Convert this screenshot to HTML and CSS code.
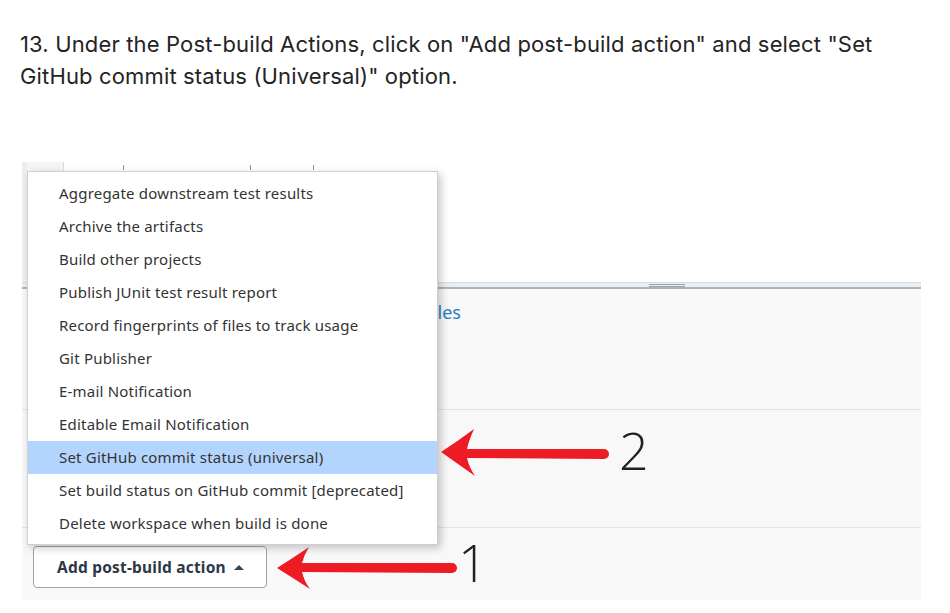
FILE: index.html
```html
<!DOCTYPE html>
<html lang="en">
<head>
<meta charset="utf-8">
<title>Post-build action</title>
<link rel="stylesheet" href="styles.css">
</head>
<body>
<p class="intro">13. Under the Post-build Actions, click on "Add post-build action" and select "Set GitHub commit status (Universal)" option.</p>
<div class="shot">
  <div class="top-panel">
    <div class="tabs">
      <span class="tab-first"></span>
      <span class="tick t1"></span>
      <span class="tick t2"></span>
      <span class="tick t3"></span>
    </div>
  </div>
  <div class="splitter"><span class="grip"></span></div>
  <div class="section s1">
    <div class="link-row"><a class="link">Inject environment variables</a></div>
  </div>
  <div class="section s2"></div>
  <div class="section s3">
    <button class="add-btn" type="button">Add post-build action<span class="caret"></span></button>
  </div>

  <ul class="menu">
    <li>Aggregate downstream test results</li>
    <li>Archive the artifacts</li>
    <li>Build other projects</li>
    <li>Publish JUnit test result report</li>
    <li>Record fingerprints of files to track usage</li>
    <li>Git Publisher</li>
    <li>E-mail Notification</li>
    <li>Editable Email Notification</li>
    <li class="active">Set GitHub commit status (universal)</li>
    <li>Set build status on GitHub commit [deprecated]</li>
    <li>Delete workspace when build is done</li>
  </ul>

  <svg class="arrows" width="899" height="438" viewBox="0 0 899 438" aria-hidden="true">
    <path d="M419 290 Q436 279 452 267 Q447 278 445 287 L582 287 A5 5 0 0 1 582 297 L445 296 Q447 305 453 314 Q436 302 419 290 Z" fill="#ed1c24"/>
    <path d="M255 406 Q271 396 287 385 Q282 393 280 401 L430 401 A5 5 0 0 1 430 411 L280 410 Q282 419 288 427 Q271 416 255 406 Z" fill="#ed1c24"/>
  </svg>
  <span class="num num-2">2</span>
  <span class="num num-1">1</span>
</div>
</body>
</html>
```

FILE: styles.css
```css
html, body {
  margin: 0;
  padding: 0;
  background: #ffffff;
}

.intro {
  margin: 28px 0 0 0;
  padding: 0 20px;
  width: 880px;
  font-family: "Inter", "Roboto", sans-serif;
  font-size: 22px;
  letter-spacing: 0.15px;
  line-height: 32px;
  color: #242424;
}

.shot {
  position: relative;
  margin: 70px 0 0 22px;
  width: 899px;
  height: 438px;
  background: #f8f8f8;
  overflow: hidden;
}

.top-panel {
  height: 120px;
  background: #ffffff;
  border-left: 5px solid #eeeeee;
  box-sizing: border-box;
}

.tabs {
  display: flex;
  height: 9px;
}

.tab-first {
  width: 36px;
  background: #f4f4f4;
  border-right: 1px solid #dcdcdc;
}

.tick {
  width: 1px;
  height: 5px;
  margin-top: 3px;
  background: #b88a55;
}

.t1 { margin-left: 59px; }
.t2 { margin-left: 126px; }
.t3 { margin-left: 62px; }

.splitter {
  height: 7px;
  box-sizing: border-box;
  border-top: 1px solid #dcdcdc;
  border-bottom: 2px solid #a9b6bf;
  background: #e9eef1;
  display: flex;
  padding-top: 1px;
}

.grip {
  display: block;
  width: 36px;
  height: 3px;
  margin-left: 627px;
  border-top: 1px solid #9aa3a8;
  border-bottom: 1px solid #9aa3a8;
  box-sizing: border-box;
}

.section {
  box-sizing: border-box;
  border-bottom: 1px solid #e2e2e2;
}

.s1 { height: 121px; padding-top: 11px; }
.s2 { height: 118px; }
.s3 { height: 72px; border-bottom: none; padding-top: 18px; padding-left: 11px; }

.link-row {
  width: 439px;
  text-align: right;
  font-family: "Noto Sans", "Open Sans", sans-serif;
  font-size: 18px;
  line-height: 24px;
}

.link {
  color: #2f7bbf;
  text-decoration: none;
}

.add-btn {
  display: flex;
  align-items: center;
  width: 234px;
  height: 42px;
  box-sizing: border-box;
  padding: 0 0 0 23px;
  border: 1px solid #98a4af;
  border-radius: 4px;
  background: #ffffff;
  font-family: "Noto Sans", "Open Sans", sans-serif;
  font-weight: 700;
  font-size: 15.5px;
  letter-spacing: 0.2px;
  color: #2e3746;
}

.caret {
  display: inline-block;
  width: 0;
  height: 0;
  margin-left: 8px;
  border-left: 5px solid transparent;
  border-right: 5px solid transparent;
  border-bottom: 5px solid #3a4350;
}

.menu {
  position: absolute;
  left: 5px;
  top: 9px;
  width: 411px;
  margin: 0;
  padding: 5px 0 4px 0;
  box-sizing: border-box;
  list-style: none;
  background: #ffffff;
  border: 1px solid #cfcfcf;
  box-shadow: 3px 3px 8px rgba(0, 0, 0, 0.22);
  font-family: "Noto Sans", "Open Sans", sans-serif;
  font-size: 15px;
  letter-spacing: 0.2px;
  color: #333333;
}

.menu li {
  height: 33px;
  line-height: 33px;
  padding-left: 31px;
  white-space: nowrap;
}

.menu li.active {
  background: #b3d4fc;
}

.arrows {
  position: absolute;
  left: 0;
  top: 0;
  pointer-events: none;
}

.num {
  position: absolute;
  font-family: "Open Sans", "Noto Sans", sans-serif;
  font-weight: 300;
  font-size: 52px;
  line-height: 1;
  color: #222222;
}

.num-2 { left: 597px; top: 262px; }
.num-1 { left: 436px; top: 374px; }
```
